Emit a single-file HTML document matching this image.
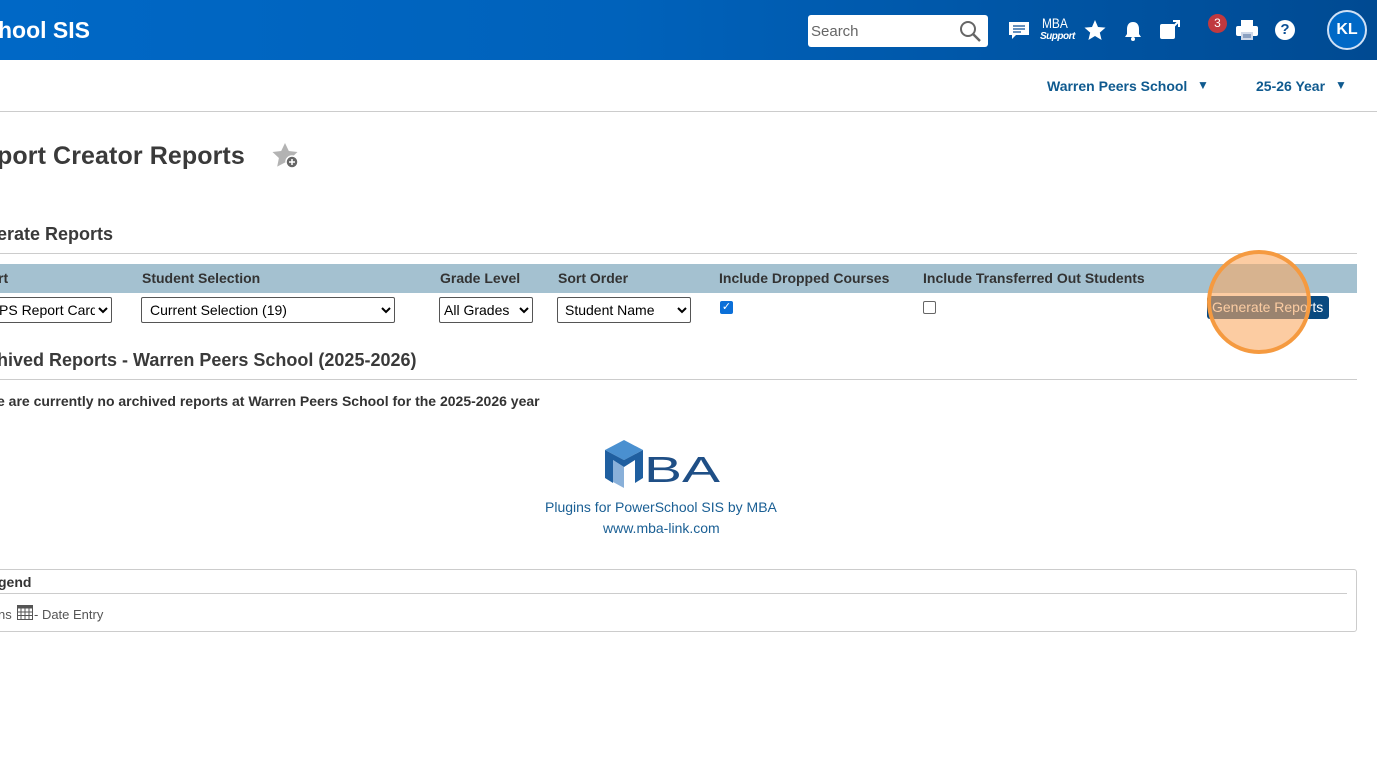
<!DOCTYPE html>
<html><head><meta charset="utf-8"><style>
*{box-sizing:border-box;margin:0;padding:0}
body{width:1377px;height:769px;overflow:hidden;background:#fff;font-family:"Liberation Sans",Arial,sans-serif;position:relative;color:#333}
.a{position:absolute;white-space:nowrap}
.hdr{position:absolute;left:0;top:0;width:1377px;height:60px;background:linear-gradient(90deg,#0068c6 0%,#0062bb 45%,#004a92 100%)}
.b{font-weight:bold}
select{position:absolute;height:26px;font-family:"Liberation Sans",Arial,sans-serif;font-size:14px;color:#000;background:#fff;border:1px solid #555;border-radius:2px;padding:0}
.th{font-size:14px;font-weight:bold;color:#333;top:270px}
.w{color:#fff}
</style></head><body>
<div class="hdr"></div>
<div class="a b w" style="left:-2px;top:17px;font-size:23px">hool SIS</div>
<div class="a" style="left:808px;top:15px;width:180px;height:32px;background:#fff;border-radius:3px"></div>
<div class="a" style="left:811px;top:23px;font-size:15px;color:#666">Search</div>
<svg class="a" style="left:958px;top:19px" width="26" height="26" viewBox="0 0 26 26"><circle cx="10" cy="10" r="7" fill="none" stroke="#666" stroke-width="2"/><path d="M15 15l7 7" stroke="#666" stroke-width="2.5"/></svg>
<svg class="a" style="left:1008px;top:21px" width="22" height="20" viewBox="0 0 22 20"><path d="M1 1h20v13H8l-4 4v-4H1z" fill="#fff"/><path d="M5 5h12M5 8h12M5 11h8" stroke="#0a4f96" stroke-width="1.3"/></svg>
<div class="a w" style="left:1042px;top:17px;font-size:14px;line-height:13px;transform:scaleX(.85);transform-origin:left">MBA</div>
<div class="a w b" style="left:1040px;top:31px;font-size:10px;font-style:italic;letter-spacing:-.5px">Support</div>
<svg class="a" style="left:1084px;top:19px" width="22" height="22" viewBox="0 0 22 22"><path d="M11 1l3 7 7.5.6-5.7 5 1.8 7.4L11 17l-6.6 4 1.8-7.4L.5 8.6 8 8z" fill="#fff"/></svg>
<svg class="a" style="left:1123px;top:20px" width="20" height="22" viewBox="0 0 20 22"><path d="M10 2c4 0 6 3 6 7v5l2 3H2l2-3V9c0-4 2-7 6-7z" fill="#fff"/><circle cx="10" cy="19" r="2" fill="#fff"/></svg>
<svg class="a" style="left:1159px;top:19px" width="22" height="22" viewBox="0 0 22 22"><rect x="1" y="5" width="15" height="15" rx="2" fill="#fff"/><path d="M11 11l9-9M14 2h6v6" stroke="#fff" stroke-width="2" fill="none"/></svg>
<div class="a" style="left:1208px;top:14px;width:19px;height:19px;border-radius:50%;background:#c0393f;color:#fff;font-size:12px;text-align:center;line-height:19px">3</div>
<svg class="a" style="left:1236px;top:20px" width="22" height="20" viewBox="0 0 22 20"><rect x="5" y="0" width="12" height="6" fill="#fff"/><rect x="0" y="6" width="22" height="10" rx="2" fill="#fff"/><rect x="5" y="12" width="12" height="8" fill="#cfd8e8"/><path d="M7 15h8M7 17h8" stroke="#4a6a9a" stroke-width="1"/></svg>
<div class="a" style="left:1275px;top:20px;width:20px;height:20px;border-radius:50%;background:#fff;color:#0a4f96;font-weight:bold;font-size:15px;text-align:center;line-height:20px">?</div>
<div class="a b" style="left:1327px;top:10px;width:40px;height:40px;border-radius:50%;background:#0068c6;border:2px solid #cfe0f5;color:#fff;font-size:16px;text-align:center;line-height:36px">KL</div>

<div class="a b" style="left:1047px;top:78px;font-size:14px;color:#0f5a8f">Warren Peers School</div>
<div class="a" style="left:1197px;top:78px;font-size:12px;color:#0f5a8f">▼</div>
<div class="a b" style="left:1256px;top:78px;font-size:14px;color:#0f5a8f">25-26 Year</div>
<div class="a" style="left:1335px;top:78px;font-size:12px;color:#0f5a8f">▼</div>
<div class="a" style="left:0;top:111px;width:1377px;height:1px;background:#ccc"></div>

<div class="a b" style="left:-3px;top:142px;font-size:25px;color:#3a3a3a;letter-spacing:.1px">port Creator Reports</div>
<svg class="a" style="left:272px;top:142px" width="30" height="30" viewBox="0 0 30 30"><path d="M13 1l3.8 8 8.7 1-6.4 6 1.7 8.6L13 20.5 5.2 24.6 6.9 16 .5 10l8.7-1z" fill="#b3b3b3"/><circle cx="20" cy="20" r="6" fill="#666" stroke="#fff" stroke-width="1.5"/><path d="M20 17v6M17 20h6" stroke="#fff" stroke-width="1.5"/></svg>

<div class="a b" style="left:-3px;top:224px;font-size:18px;color:#3a3a3a">erate Reports</div>
<div class="a" style="left:0;top:253px;width:1357px;height:1px;background:#ccc"></div>
<div class="a" style="left:0;top:264px;width:1357px;height:29px;background:#a4c1d0"></div>
<div class="a th" style="left:-2px">rt</div>
<div class="a th" style="left:142px">Student Selection</div>
<div class="a th" style="left:440px">Grade Level</div>
<div class="a th" style="left:558px">Sort Order</div>
<div class="a th" style="left:719px">Include Dropped Courses</div>
<div class="a th" style="left:923px">Include Transferred Out Students</div>
<select style="left:-10px;top:297px;width:122px;padding-left:4px"><option>PS Report Card</option></select>
<select style="left:141px;top:297px;width:254px;padding-left:4px"><option>Current Selection (19)</option></select>
<select style="left:439px;top:297px;width:94px"><option>All Grades</option></select>
<select style="left:557px;top:297px;width:134px;padding-left:3px"><option>Student Name</option></select>
<div class="a" style="left:720px;top:301px;width:13px;height:13px;background:#0b6fd8;border-radius:2px;color:#fff;font-size:11px;text-align:center;line-height:13px">✓</div>
<div class="a" style="left:923px;top:301px;width:13px;height:13px;border:1px solid #666;border-radius:2px;background:#fff"></div>
<div class="a" style="left:1207px;top:296px;width:122px;height:23px;background:#0a4a80;border-radius:3px;color:#fff;font-size:14px;line-height:23px;padding-left:5px">Generate Reports</div>
<div class="a" style="left:1207px;top:250px;width:104px;height:104px;border-radius:50%;background:rgba(250,170,100,.6);border:4px solid #f59a40"></div>

<div class="a b" style="left:-3px;top:350px;font-size:18px;color:#3a3a3a">hived Reports - Warren Peers School (2025-2026)</div>
<div class="a" style="left:0;top:379px;width:1357px;height:1px;background:#ccc"></div>
<div class="a b" style="left:-3px;top:393px;font-size:14px;color:#333">e are currently no archived reports at Warren Peers School for the 2025-2026 year</div>

<svg class="a" style="left:603px;top:440px" width="118" height="50" viewBox="0 0 118 50"><path d="M2 10l19-10 19 10-19 10z" fill="#4a90d0"/><path d="M2 10v28l8 5V20l11 7 11-7v23l8-5V10L21 20z" fill="#1f5fa0"/><path d="M10 20l11 7v21L10 42z" fill="#3a7cc0" opacity=".6"/><text x="41" y="42" font-family="Liberation Sans,Arial,sans-serif" font-size="36" fill="#1f4f86" textLength="76" lengthAdjust="spacingAndGlyphs">BA</text></svg>
<div class="a" style="left:545px;top:499px;font-size:14px;color:#1a5f94">Plugins for PowerSchool SIS by MBA</div>
<div class="a" style="left:603px;top:520px;font-size:14px;color:#1a5f94">www.mba-link.com</div>

<div class="a" style="left:-5px;top:569px;width:1362px;height:63px;border:1px solid #ccc;border-radius:3px"></div>
<div class="a b" style="left:-2px;top:574px;font-size:14px;color:#333">gend</div>
<div class="a" style="left:0;top:593px;width:1347px;height:1px;background:#ccc"></div>
<div class="a" style="left:-2px;top:607px;font-size:13px;color:#555">ns</div>
<svg class="a" style="left:17px;top:605px" width="16" height="15" viewBox="0 0 16 15"><rect x=".5" y=".5" width="15" height="14" fill="#fff" stroke="#555"/><rect x=".5" y=".5" width="15" height="3" fill="#555"/><path d="M4 3v12M8 3v12M12 3v12M0 7h16M0 10.5h16" stroke="#555"/></svg>
<div class="a" style="left:34px;top:607px;font-size:13px;color:#555">- Date Entry</div>
</body></html>
